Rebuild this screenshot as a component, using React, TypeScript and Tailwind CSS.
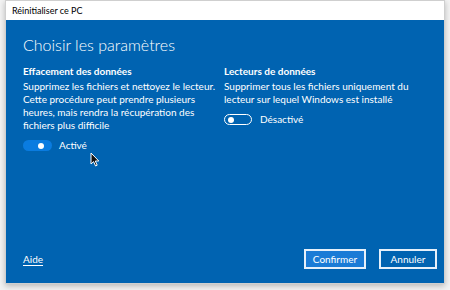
export default function App() {
  return (
    <div className="h-[290px] w-[450px] bg-[#f3f3f3] pl-[5px] pr-[5px] font-['Lato','Open_Sans',sans-serif]">
      <div className="relative flex h-[284px] w-[440px] flex-col border border-[#cfcfcf] shadow-[0_2px_6px_rgba(0,0,0,0.25)]">
        <div className="flex h-[19px] items-center bg-white pl-[6px] text-[9px] text-black">
          Réinitialiser ce PC
        </div>
        <div className="flex flex-1 flex-col bg-[#0063b1] pb-[14px] pl-[17px] pr-[7px] text-white">
          <h1 className="mt-[14px] text-[16px] font-light leading-[22px]">Choisir les paramètres</h1>

          <div className="mt-[8px] grid grid-cols-[201px_1fr]">
            <div>
              <div className="text-[10px] font-bold leading-[14px]">Effacement des données</div>
              <p className="mt-[2px] whitespace-nowrap text-[10px] leading-[13px]">
                Supprimez les fichiers et nettoyez le lecteur.
                <br />
                Cette procédure peut prendre plusieurs
                <br />
                heures, mais rendra la récupération des
                <br />
                fichiers plus difficile
              </p>
              <div className="mt-[6px] flex items-center gap-[7px]">
                <div className="flex h-[11px] w-[29px] items-center justify-end rounded-full bg-[#0a7ce0] pr-[8px]">
                  <div className="h-[6px] w-[6px] rounded-full bg-white" />
                </div>
                <span className="text-[10px]">Activé</span>
              </div>
            </div>
            <div>
              <div className="text-[10px] font-bold leading-[14px]">Lecteurs de données</div>
              <p className="mt-[2px] whitespace-nowrap text-[10px] leading-[13px]">
                Supprimer tous les fichiers uniquement du
                <br />
                lecteur sur lequel Windows est installé
              </p>
              <div className="mt-[6px] flex items-center gap-[8px]">
                <div className="flex h-[11px] w-[28px] items-center rounded-full border-[1.5px] border-white pl-[3px]">
                  <div className="h-[6px] w-[6px] rounded-full bg-white" />
                </div>
                <span className="text-[10px]">Désactivé</span>
              </div>
            </div>
          </div>

          <div className="mt-auto flex items-center justify-between">
            <a className="text-[10px] underline underline-offset-2">Aide</a>
            <div className="flex gap-[13px]">
              <button className="h-[20px] w-[62px] border-2 border-[#e6f0fa] bg-[#1a7bd6] text-[10px] text-white">
                Confirmer
              </button>
              <button className="h-[20px] w-[58px] border-2 border-[#e6f0fa] bg-[#0063b1] text-[10px] text-white">
                Annuler
              </button>
            </div>
          </div>
        </div>

        <svg className="absolute left-[84px] top-[151px]" width="10" height="15" viewBox="0 0 10 15">
          <path d="M1 1 L1 12 L3.6 9.6 L5.6 14 L7.2 13.2 L5.3 9 L8.8 9 Z" fill="#111" stroke="#fff" strokeWidth="1" strokeLinejoin="round" />
        </svg>
      </div>
    </div>
  )
}
